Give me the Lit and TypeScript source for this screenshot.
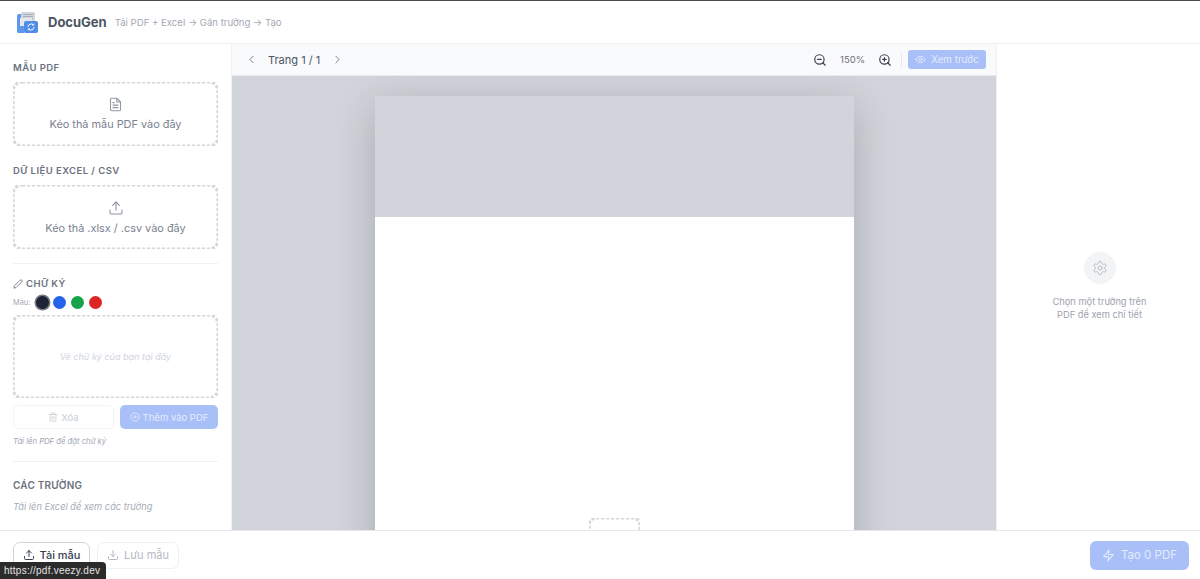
// app.ts
import { LitElement, html, css, svg } from 'lit';
import { customElement } from 'lit/decorators.js';

const icon = (d: unknown, size = 14, sw = 2) => html`<svg
  width=${size}
  height=${size}
  viewBox="0 0 24 24"
  fill="none"
  stroke="currentColor"
  stroke-width=${sw}
  stroke-linecap="round"
  stroke-linejoin="round"
>${d}</svg>`;

const upload = svg`<path d="M21 15v4a2 2 0 0 1-2 2H5a2 2 0 0 1-2-2v-4"/><path d="M17 8l-5-5-5 5"/><path d="M12 3v12"/>`;
const download = svg`<path d="M21 15v4a2 2 0 0 1-2 2H5a2 2 0 0 1-2-2v-4"/><path d="M7 10l5 5 5-5"/><path d="M12 15V3"/>`;
const fileText = svg`<path d="M14 2H6a2 2 0 0 0-2 2v16a2 2 0 0 0 2 2h12a2 2 0 0 0 2-2V8z"/><path d="M14 2v6h6"/><path d="M16 13H8"/><path d="M16 17H8"/><path d="M10 9H8"/>`;
const pencil = svg`<path d="M17 3a2.85 2.83 0 1 1 4 4L7.5 20.5 2 22l1.5-5.5z"/>`;
const trash = svg`<path d="M3 6h18"/><path d="M19 6v14a2 2 0 0 1-2 2H7a2 2 0 0 1-2-2V6"/><path d="M8 6V4a2 2 0 0 1 2-2h4a2 2 0 0 1 2 2v2"/><path d="M10 11v6"/><path d="M14 11v6"/>`;
const plusCircle = svg`<circle cx="12" cy="12" r="10"/><path d="M12 8v8"/><path d="M8 12h8"/>`;
const chevronLeft = svg`<path d="M15 18l-6-6 6-6"/>`;
const chevronRight = svg`<path d="M9 18l6-6-6-6"/>`;
const zoomOut = svg`<circle cx="11" cy="11" r="8"/><path d="M21 21l-4.3-4.3"/><path d="M8 11h6"/>`;
const zoomIn = svg`<circle cx="11" cy="11" r="8"/><path d="M21 21l-4.3-4.3"/><path d="M11 8v6"/><path d="M8 11h6"/>`;
const eye = svg`<path d="M2 12s3.5-7 10-7 10 7 10 7-3.5 7-10 7-10-7-10-7z"/><circle cx="12" cy="12" r="3"/>`;
const zap = svg`<path d="M13 2L3 14h9l-1 8 10-12h-9z"/>`;
const settings = svg`<path d="M12.22 2h-.44a2 2 0 0 0-2 2v.18a2 2 0 0 1-1 1.73l-.43.25a2 2 0 0 1-2 0l-.15-.08a2 2 0 0 0-2.73.73l-.22.38a2 2 0 0 0 .73 2.73l.15.1a2 2 0 0 1 1 1.72v.51a2 2 0 0 1-1 1.74l-.15.09a2 2 0 0 0-.73 2.73l.22.38a2 2 0 0 0 2.73.73l.15-.08a2 2 0 0 1 2 0l.43.25a2 2 0 0 1 1 1.73V20a2 2 0 0 0 2 2h.44a2 2 0 0 0 2-2v-.18a2 2 0 0 1 1-1.73l.43-.25a2 2 0 0 1 2 0l.15.08a2 2 0 0 0 2.73-.73l.22-.39a2 2 0 0 0-.73-2.73l-.15-.08a2 2 0 0 1-1-1.74v-.5a2 2 0 0 1 1-1.74l.15-.09a2 2 0 0 0 .73-2.73l-.22-.38a2 2 0 0 0-2.73-.73l-.15.08a2 2 0 0 1-2 0l-.43-.25a2 2 0 0 1-1-1.73V4a2 2 0 0 0-2-2z"/><circle cx="12" cy="12" r="3"/>`;

@customElement('app-root')
export class AppRoot extends LitElement {
  static override styles = css`
    :host {
      display: grid;
      grid-template-rows: 44px 1fr 49px;
      height: 100vh;
      overflow: hidden;
      position: relative;
      font-family: Inter, 'Liberation Sans', sans-serif;
      color: #6b7280;
      background: #fff;
    }
    svg {
      display: block;
      flex: none;
    }

    .header {
      display: flex;
      align-items: center;
      padding: 0 16px;
      border-top: 1px solid #4b4b4b;
      border-bottom: 1px solid #f0f1f3;
      box-sizing: border-box;
    }
    .brand {
      margin-left: 9px;
      font-size: 13px;
      font-weight: 700;
      color: #4b5563;
    }
    .steps {
      margin-left: 8px;
      font-size: 9.6px;
      color: #a3a9b3;
    }

    .main {
      display: grid;
      grid-template-columns: 232px 1fr 204px;
      min-height: 0;
    }

    .side {
      padding: 18px 13px 0;
      overflow: hidden;
      border-right: 1px solid #f0f1f3;
      box-sizing: border-box;
    }
    .label {
      font-size: 9.5px;
      line-height: 12px;
      font-weight: 600;
      letter-spacing: 0.45px;
      color: #6b7280;
      display: flex;
      align-items: center;
      gap: 3px;
    }
    .label.big {
      font-size: 10px;
      letter-spacing: 0.2px;
    }
    /* 1.6px dashes with a 5px period, finer than a css dashed border can give */
    .drop,
    .sign {
      background-image: url("data:image/svg+xml,%3Csvg xmlns='http://www.w3.org/2000/svg' width='100%25' height='100%25'%3E%3Crect width='100%25' height='100%25' fill='none' rx='9' ry='9' stroke='%23d4d7dc' stroke-width='3.2' stroke-dasharray='3.2 1.8'/%3E%3C/svg%3E");
    }
    .drop {
      margin-top: 8px;
      height: 64px;
      display: flex;
      flex-direction: column;
      align-items: center;
      justify-content: center;
      gap: 5px;
      font-size: 10.9px;
      line-height: 14px;
      color: #7b8290;
    }
    .drop svg {
      color: #8f96a3;
    }
    .second {
      margin-top: 19px;
    }
    .rule {
      height: 1px;
      background: #f0f1f3;
      margin: 14px 0;
    }
    .rule.wide {
      margin: 13px 0 17px;
    }
    .colors {
      display: flex;
      align-items: center;
      gap: 5px;
      margin-top: 6px;
      font-size: 7.4px;
      color: #a6acb6;
    }
    .dot {
      width: 13px;
      height: 13px;
      border-radius: 50%;
    }
    .dot.active {
      box-shadow: 0 0 0 1.5px #737a86;
      margin: 0 -1px 0 0.5px;
    }
    .sign {
      margin-top: 6px;
      height: 83px;
      display: flex;
      align-items: center;
      justify-content: center;
      font-size: 9px;
      font-style: italic;
      color: #d1d5db;
    }
    .actions {
      display: grid;
      grid-template-columns: 101px 1fr;
      gap: 6px;
      margin-top: 7px;
    }
    .btn {
      height: 24px;
      box-sizing: border-box;
      border-radius: 5px;
      display: flex;
      align-items: center;
      justify-content: center;
      gap: 3px;
      font-size: 9.5px;
    }
    .btn.ghost {
      border: 1px solid #f3f4f6;
      color: #c9cdd4;
    }
    .btn.primary {
      background: #a9bff8;
      color: #e4ebfd;
    }
    .note {
      font-size: 7.7px;
      line-height: 12px;
      font-style: italic;
      color: #9ca3af;
      margin-top: 7px;
    }
    .fields-note {
      font-size: 9.25px;
      line-height: 14px;
      font-style: italic;
      color: #a6acb6;
      margin-top: 9px;
    }

    .center {
      display: flex;
      flex-direction: column;
      min-height: 0;
      min-width: 0;
    }
    .toolbar {
      height: 32px;
      flex: none;
      box-sizing: border-box;
      background: #f9fafb;
      border-bottom: 1px solid #e5e7eb;
      display: flex;
      align-items: center;
      padding: 0 10px 0 13px;
      gap: 8px;
      color: #6b7280;
    }
    .page-no {
      font-size: 11px;
      color: #4b5563;
      margin: 0 3px 0 2px;
    }
    .spacer {
      flex: 1;
    }
    .zoom {
      display: flex;
      align-items: center;
      gap: 12px;
      color: #374151;
    }
    .pct {
      font-size: 9.5px;
      color: #6b7280;
      margin: 0 1px;
    }
    .bar {
      width: 1px;
      height: 14px;
      background: #e5e7eb;
      margin: 0 -6px 0 -3px;
    }
    .preview {
      width: 78px;
      height: 19px;
      border-radius: 3px;
      font-size: 9.8px;
      gap: 5px;
    }
    .viewer {
      flex: 1;
      min-height: 0;
      overflow: hidden;
      background: #d1d5db;
      padding-top: 20px;
      display: flex;
      justify-content: center;
    }
    .pdf {
      position: relative;
      width: 479px;
      height: 680px;
      flex: none;
      background: #fff;
      box-shadow: 0 10px 40px rgba(0, 0, 0, 0.2);
    }
    .pdf-head {
      height: 121px;
      background: #d1d5db;
    }
    .field {
      position: absolute;
      left: 214px;
      top: 422px;
      width: 51px;
      height: 30px;
      background-image: url("data:image/svg+xml,%3Csvg xmlns='http://www.w3.org/2000/svg' width='100%25' height='100%25'%3E%3Crect width='100%25' height='100%25' fill='none' rx='7' ry='7' stroke='%23d4d7dc' stroke-width='3.2' stroke-dasharray='3.2 1.8'/%3E%3C/svg%3E");
    }

    .panel {
      border-left: 1px solid #f0f1f3;
      display: flex;
      flex-direction: column;
      align-items: center;
      padding: 208px 0 0 2px;
      box-sizing: border-box;
    }
    .gear {
      width: 32px;
      height: 32px;
      border-radius: 50%;
      background: #f3f4f6;
      color: #b8bdc7;
      display: flex;
      align-items: center;
      justify-content: center;
    }
    .hint {
      margin-top: 11px;
      font-size: 9.3px;
      line-height: 13px;
      text-align: center;
      color: #9ca3af;
    }

    .footer {
      display: flex;
      align-items: center;
      gap: 7px;
      padding: 0 11px 0 13px;
      border-top: 1px solid #e5e7eb;
      box-sizing: border-box;
    }
    .foot-btn {
      height: 27px;
      box-sizing: border-box;
      border-radius: 7px;
      display: flex;
      align-items: center;
      justify-content: center;
      gap: 5px;
      font-size: 11px;
    }
    .load {
      width: 77px;
      border: 1px solid #d1d5db;
      color: #374151;
      font-weight: 500;
    }
    .save {
      width: 82px;
      border: 1px solid #f0f1f3;
      color: #b4b9c3;
    }
    .run {
      width: 99px;
      height: 29px;
      border-radius: 6px;
      background: #a9bff8;
      color: #e4ebfd;
      font-size: 11.5px;
      gap: 6px;
    }
    .tooltip {
      position: absolute;
      left: 0;
      bottom: 0;
      height: 17px;
      width: 106px;
      box-sizing: border-box;
      padding: 0 4px;
      border-top-right-radius: 4px;
      background: #2b2b2b;
      color: #e5e5e5;
      font-family: 'Liberation Sans', sans-serif;
      font-size: 10px;
      letter-spacing: 0.25px;
      line-height: 17px;
    }
  `;

  override render() {
    return html`
      <div class="header">
        <svg width="23" height="23" viewBox="0 0 23 23">
          <rect x="5" y="1" width="14" height="12" rx="1" fill="#d3d7dd" />
          <path d="M7 3.5h10M7 5.5h10M7 7.5h10" stroke="#9ca2ad" stroke-width="0.8" />
          <path d="M1 5a2 2 0 0 1 2-2h2v19H3a2 2 0 0 1-2-2z" fill="#5f97ea" />
          <rect x="4" y="7" width="12" height="15" fill="#e4e7ec" />
          <path d="M1 15h7v7H3a2 2 0 0 1-2-2z" fill="#5f97ea" />
          <rect x="8" y="10" width="14" height="12" rx="2" fill="#4f8de8" />
          <path
            d="M12 16a3.2 3.2 0 0 1 5.4-2.2M18 16a3.2 3.2 0 0 1-5.4 2.2"
            fill="none"
            stroke="#fff"
            stroke-width="1"
          />
          <path d="M17.8 12.6v1.6h-1.6M12.2 19.4v-1.6h1.6" fill="none" stroke="#fff" stroke-width="0.8" />
        </svg>
        <span class="brand">DocuGen</span>
        <span class="steps">Tải PDF + Excel → Gán trường → Tạo</span>
      </div>

      <div class="main">
        <aside class="side">
          <div class="label">MẪU PDF</div>
          <div class="drop">${icon(fileText, 15, 1.7)}Kéo thả mẫu PDF vào đây</div>
          <div class="label second">DỮ LIỆU EXCEL / CSV</div>
          <div class="drop">${icon(upload, 16, 1.7)}Kéo thả .xlsx / .csv vào đây</div>
          <div class="rule"></div>
          <div class="label">${icon(pencil, 10)}CHỮ KÝ</div>
          <div class="colors">
            Màu:
            <span class="dot active" style="background:#1e2235"></span>
            <span class="dot" style="background:#2563eb"></span>
            <span class="dot" style="background:#16a34a"></span>
            <span class="dot" style="background:#dc2626"></span>
          </div>
          <div class="sign">Vẽ chữ ký của bạn tại đây</div>
          <div class="actions">
            <div class="btn ghost">${icon(trash, 10)}Xóa</div>
            <div class="btn primary">${icon(plusCircle, 10)}Thêm vào PDF</div>
          </div>
          <div class="note">Tải lên PDF để đặt chữ ký</div>
          <div class="rule wide"></div>
          <div class="label big">CÁC TRƯỜNG</div>
          <div class="fields-note">Tải lên Excel để xem các trường</div>
        </aside>

        <section class="center">
          <div class="toolbar">
            ${icon(chevronLeft, 13, 1.6)}
            <span class="page-no">Trang 1 / 1</span>
            ${icon(chevronRight, 13, 1.6)}
            <span class="spacer"></span>
            <div class="zoom">
              ${icon(zoomOut, 14)}
              <span class="pct">150%</span>
              ${icon(zoomIn, 14)}
              <span class="bar"></span>
              <div class="btn primary preview">${icon(eye, 11)}Xem trước</div>
            </div>
          </div>
          <div class="viewer">
            <div class="pdf">
              <div class="pdf-head"></div>
              <div class="field"></div>
            </div>
          </div>
        </section>

        <aside class="panel">
          <div class="gear">${icon(settings, 16, 1.5)}</div>
          <div class="hint">Chọn một trường trên<br />PDF để xem chi tiết</div>
        </aside>
      </div>

      <div class="footer">
        <div class="foot-btn load">${icon(upload, 12)}Tải mẫu</div>
        <div class="foot-btn save">${icon(download, 12)}Lưu mẫu</div>
        <span class="spacer"></span>
        <div class="foot-btn run">${icon(zap, 13)}Tạo 0 PDF</div>
      </div>
      <div class="tooltip">https://pdf.veezy.dev</div>
    `;
  }
}
